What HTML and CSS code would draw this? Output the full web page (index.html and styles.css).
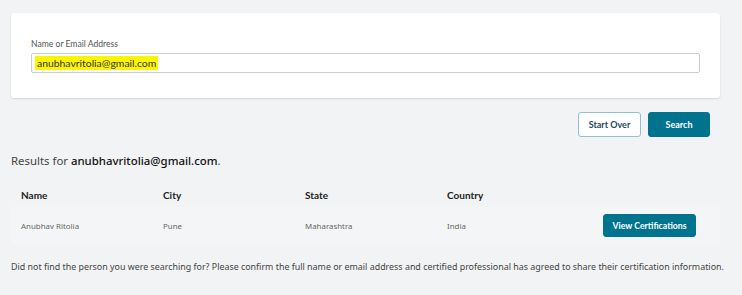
FILE: index.html
```html
<!DOCTYPE html>
<html>
<head>
<meta charset="utf-8">
<link rel="stylesheet" href="styles.css">
</head>
<body>
<div class="page">
  <div class="card">
    <label class="label">Name or Email Address</label>
    <div class="input"><span class="hl">anubhavritolia@gmail.com</span></div>
  </div>
  <div class="actions">
    <button class="btn btn-outline">Start Over</button>
    <button class="btn btn-primary">Search</button>
  </div>
  <p class="results">Results for <span class="q">anubhavritolia@gmail.com</span>.</p>
  <div class="table">
    <div class="thead">
      <div>Name</div><div>City</div><div>State</div><div>Country</div><div></div>
    </div>
    <div class="trow">
      <div>Anubhav Ritolia</div><div>Pune</div><div>Maharashtra</div><div>India</div>
      <div class="cell-btn"><button class="btn btn-primary btn-view">View Certifications</button></div>
    </div>
  </div>
  <p class="note">Did not find the person you were searching for? Please confirm the full name or email address and certified professional has agreed to share their certification information.</p>
</div>
</body>
</html>
```
FILE: styles.css
```css
* { box-sizing: border-box; }
html, body { margin: 0; padding: 0; }
body {
  background: #f2f3f5;
  font-family: "Noto Sans", "Open Sans", sans-serif;
  color: #333;
  width: 742px;
  height: 295px;
  overflow: hidden;
}
.page { padding: 13px 22px 0 11px; }
.card {
  background: #fff;
  border-radius: 3px;
  box-shadow: 0 1px 2px rgba(0,0,0,0.12);
  padding: 25px 20px 25px 20px;
  height: 85px;
}
.label {
  display: block;
  font-family: Lato, sans-serif;
  font-size: 8.6px;
  color: #555;
  line-height: 12px;
  margin-bottom: 3px;
}
.input {
  height: 20px;
  border: 1px solid #c7cfcf;
  border-radius: 2px;
  padding: 2px 3px;
  font-family: Lato, sans-serif;
  font-size: 10.4px;
  line-height: 14px;
  color: #333;
}
.hl { background: #fbf500; padding: 0 2px; display: inline-block; }
.actions {
  display: flex;
  justify-content: flex-end;
  gap: 7px;
  margin-top: 14px;
  padding-right: 10px;
}
.btn {
  font-family: Lato, sans-serif;
  font-weight: 700;
  font-size: 9px;
  border-radius: 3px;
  cursor: pointer;
  height: 25px;
  padding: 0;
}
.btn-outline {
  width: 63px;
  background: #fff;
  border: 1px solid #8fc1cf;
  color: #1e4b5a;
}
.btn-primary {
  width: 62px;
  background: #00738f;
  border: 1px solid #00738f;
  color: #fff;
}
.results {
  margin: 16px 0 0 0;
  font-size: 11.4px;
  line-height: 16px;
  color: #444;
}
.q { color: #111; font-weight: 500; }
.table { margin-top: 20px; }
.thead, .trow {
  display: grid;
  grid-template-columns: 142px 142px 142px 142px 1fr;
  padding-left: 10px;
  align-items: center;
}
.thead {
  font-family: Lato, sans-serif;
  font-weight: 700;
  font-size: 10px;
  color: #222;
  height: 12px;
}
.trow {
  margin-top: 6px;
  height: 37px;
  background: #f4f5f6;
  font-size: 7.9px;
  color: #666;
}
.cell-btn { display: flex; justify-content: flex-end; padding-right: 24px; }
.btn-view { width: 93px; height: 23px; font-size: 8.7px; }
.note {
  margin: 16px 0 0 0;
  font-size: 8.9px;
  line-height: 14px;
  color: #444;
  white-space: nowrap;
}
```
